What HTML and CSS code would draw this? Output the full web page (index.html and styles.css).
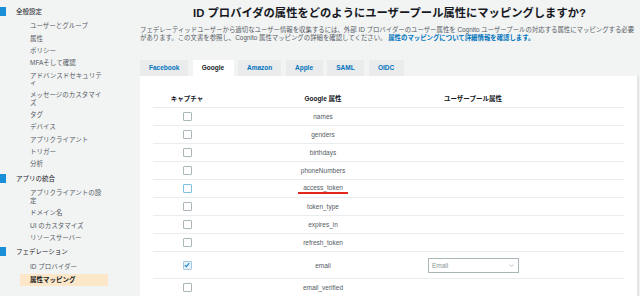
FILE: index.html
```html
<!DOCTYPE html>
<html lang="ja">
    <head>
        <meta charset="utf-8">
        <meta name="viewport" content="width=device-width, initial-scale=1.0">
        <title>属性マッピング</title>
        <link rel="stylesheet" href="styles.css">
    </head>
    <body>
        <aside class="nav">
            <div class="nav__section is-marked">全般設定</div>
            <a class="nav__item">ユーザーとグループ</a>
            <a class="nav__item">属性</a>
            <a class="nav__item">ポリシー</a>
            <a class="nav__item">MFAそして確認</a>
            <a class="nav__item">アドバンスドセキュリティ</a>
            <a class="nav__item">メッセージのカスタマイズ</a>
            <a class="nav__item">タグ</a>
            <a class="nav__item">デバイス</a>
            <a class="nav__item">アプリクライアント</a>
            <a class="nav__item">トリガー</a>
            <a class="nav__item">分析</a>
            <div class="nav__section is-marked">アプリの統合</div>
            <a class="nav__item">アプリクライアントの設定</a>
            <a class="nav__item">ドメイン名</a>
            <a class="nav__item">UI のカスタマイズ</a>
            <a class="nav__item">リソースサーバー</a>
            <div class="nav__section is-marked">フェデレーション</div>
            <a class="nav__item">ID プロバイダー</a>
            <a class="nav__item is-active">属性マッピング</a>
        </aside>

        <main class="content">
            <h1 class="content__title">ID プロバイダの属性をどのようにユーザープール属性にマッピングしますか?</h1>
            <p class="content__desc">
                フェデレーティッドユーザーから適切なユーザー情報を収集するには、外部 ID プロバイダーのユーザー属性を Cognito ユーザープールの対応する属性にマッピングする必要があります。この文書を参照し、Cognito 属性マッピングの詳細を確認してください。
                <a class="link">属性のマッピングについて詳細情報を確認します。</a>
            </p>

            <div class="tabs">
                <a class="tab">Facebook</a>
                <a class="tab tab--active">Google</a>
                <a class="tab">Amazon</a>
                <a class="tab">Apple</a>
                <a class="tab">SAML</a>
                <a class="tab">OIDC</a>
            </div>

            <div class="panel">
                <table class="attr-table">
                    <colgroup>
                        <col class="col-capture">
                        <col class="col-google">
                        <col class="col-pool">
                        <col>
                    </colgroup>
                    <thead>
                        <tr>
                            <th>キャプチャ</th>
                            <th>Google 属性</th>
                            <th>ユーザープール属性</th>
                            <th></th>
                        </tr>
                    </thead>
                    <tbody>
                        <tr><td><span class="check"></span></td><td>names</td><td></td><td></td></tr>
                        <tr><td><span class="check"></span></td><td>genders</td><td></td><td></td></tr>
                        <tr><td><span class="check"></span></td><td>birthdays</td><td></td><td></td></tr>
                        <tr><td><span class="check"></span></td><td>phoneNumbers</td><td></td><td></td></tr>
                        <tr><td><span class="check check--focus"></span></td><td><span class="marked">access_token</span></td><td></td><td></td></tr>
                        <tr><td><span class="check"></span></td><td>token_type</td><td></td><td></td></tr>
                        <tr><td><span class="check"></span></td><td>expires_in</td><td></td><td></td></tr>
                        <tr><td><span class="check"></span></td><td>refresh_token</td><td></td><td></td></tr>
                        <tr class="row--tall">
                            <td>
                                <span class="check check--on">
                                    <svg viewBox="0 0 8 8" width="6" height="6"><path d="M1 4.2 L3.1 6.2 L7 1.6" fill="none" stroke="#1a84c9" stroke-width="1.4"/></svg>
                                </span>
                            </td>
                            <td>email</td>
                            <td>
                                <div class="select">
                                    <span>Email</span>
                                    <svg viewBox="0 0 8 5" width="5" height="3"><path d="M1 1 L4 4 L7 1" fill="none" stroke="#879596" stroke-width="1"/></svg>
                                </div>
                            </td>
                            <td></td>
                        </tr>
                        <tr><td><span class="check"></span></td><td>email_verified</td><td></td><td></td></tr>
                    </tbody>
                </table>
            </div>
        </main>
    </body>
</html>
```

FILE: styles.css
```css
html, body {
    margin: 0;
    height: 100%;
}
body {
    display: flex;
    overflow: hidden;
    background-color: #f2f3f3;
    font-family: "Liberation Sans", "Noto Sans CJK JP", sans-serif;
    color: #545b64;
}

/* left navigation */
.nav {
    width: 118px;
    flex-shrink: 0;
    padding-top: 5px;
    box-sizing: border-box;
    font-size: 6.5px;
    line-height: 7.5px;
}
.nav__section {
    position: relative;
    padding: 2.5px 14px 2.5px 16px;
    color: #16191f;
}
.nav__section + .nav__item {
    margin-top: 2.5px;
}
.nav__item + .nav__section {
    margin-top: 2px;
}
.nav__section.is-marked::before {
    content: "";
    position: absolute;
    left: 0;
    top: 1.5px;
    width: 6px;
    height: 9px;
    background-color: #1a8ed6;
}
.nav__item {
    display: block;
    padding: 2.4px 14px 2.4px 30px;
    color: #545b64;
}
.nav__item.is-active {
    margin: 1px 10px 0 20px;
    padding: 2.4px 4px 2.4px 10px;
    background-color: #fce7c8;
    color: #16191f;
    font-weight: bold;
}

/* main area */
.content {
    flex: 1;
    display: flex;
    flex-direction: column;
    padding: 5px 1px 0 22px;
    min-width: 0;
}
.content__title {
    margin: 0;
    font-size: 11.3px;
    line-height: 16px;
    text-align: center;
    color: #16191f;
}
.content__desc {
    margin: 5px 4px 0 0;
    font-size: 6.4px;
    line-height: 8.4px;
    color: #545b64;
}
.link {
    color: #0073bb;
    font-weight: bold;
}

.tabs {
    display: flex;
    gap: 4.5px;
    margin-top: 17.5px;
}
.tab {
    height: 16px;
    line-height: 16px;
    padding: 0 9px;
    background-color: #e9ebed;
    color: #0073bb;
    font-size: 6.5px;
    font-weight: bold;
    text-align: center;
}
.tab:nth-child(1) { width: 30px; }
.tab:nth-child(2) { width: 23px; }
.tab:nth-child(3) { width: 25px; }
.tab:nth-child(4) { width: 19px; }
.tab:nth-child(5) { width: 19px; }
.tab:nth-child(6) { width: 17px; }
.tab--active {
    background-color: #fff;
    color: #16191f;
}

.panel {
    flex: 1;
    background-color: #fff;
    border-right: 2px solid #e3e5e5;
    padding: 13px 13px 0 13px;
}

/* mapping table */
.attr-table {
    width: 100%;
    table-layout: fixed;
    border-collapse: collapse;
    font-size: 6.5px;
}
.col-capture { width: 68px; }
.col-google { width: 204px; }
.col-pool { width: 96px; }
.attr-table th {
    height: 18px;
    padding: 0;
    color: #16191f;
    font-weight: bold;
    border-bottom: 1.5px solid #eaeded;
    vertical-align: middle;
}
.attr-table td {
    height: 17px;
    padding: 0;
    text-align: center;
    vertical-align: middle;
    border-bottom: 1.5px solid #eaeded;
    color: #545b64;
}
.attr-table .row--tall td {
    height: 25.5px;
}
.attr-table tr:last-child td {
    border-bottom: none;
}

.check {
    display: inline-flex;
    align-items: center;
    justify-content: center;
    width: 7px;
    height: 7px;
    border: 1px solid #aab7b8;
    border-radius: 1px;
    vertical-align: middle;
}
.check--focus {
    border-color: #7fbfe3;
}
.check--on {
    background-color: #e6f2fa;
    border-color: #a9c9df;
}

.marked {
    display: inline-block;
    padding: 0 5px 1px;
    border-bottom: 2px solid #e2261c;
    line-height: 7px;
}

.select {
    display: flex;
    align-items: center;
    justify-content: space-between;
    width: 91px;
    height: 15px;
    margin-left: 3px;
    padding: 0 4px 0 3px;
    box-sizing: border-box;
    border: 1px solid #aab7b8;
    color: #879596;
    text-align: left;
}
```
